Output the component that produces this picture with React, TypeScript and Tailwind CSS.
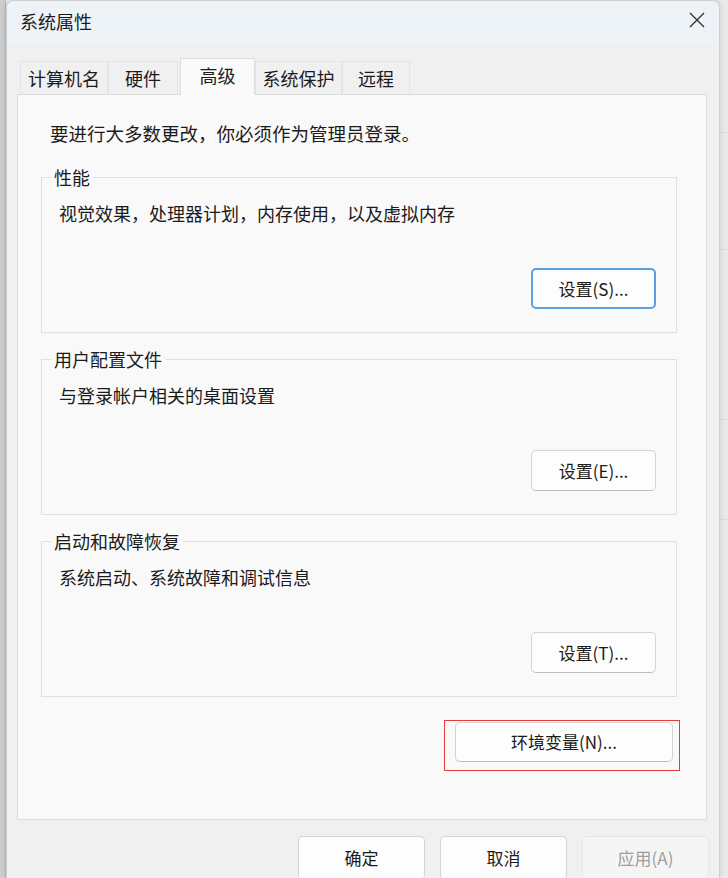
import React from "react"

const font = { fontFamily: '"Noto Sans CJK SC", "Noto Sans", sans-serif' }

const tabs = [
  { label: "计算机名", w: "w-[88px]" },
  { label: "硬件", w: "w-[70px]" },
  { label: "高级", w: "w-[75px]", active: true },
  { label: "系统保护", w: "w-[87px]" },
  { label: "远程", w: "w-[68px]" },
]

function Button({
  children,
  className = "",
  focused = false,
  disabled = false,
}: {
  children: React.ReactNode
  className?: string
  focused?: boolean
  disabled?: boolean
}) {
  const tone = disabled
    ? "bg-[#f5f5f5] border border-[#e6e6e6] text-[#9d9d9d]"
    : focused
      ? "bg-[#fdfdfd] border-2 border-[#5b9fe3] text-[#1b1b1b]"
      : "bg-[#fdfdfd] border border-[#d3d3d3] border-b-[#bdbdbd] text-[#1b1b1b]"
  return (
    <button
      className={`flex items-center justify-center rounded-[5px] text-[17px] ${tone} ${className}`}
    >
      {children}
    </button>
  )
}

function Group({
  title,
  text,
  action,
  focused,
  className = "",
}: {
  title: string
  text: string
  action: string
  focused?: boolean
  className?: string
}) {
  return (
    <div className={`relative mx-[23px] mr-[29px] h-[156px] border border-[#e0e0e0] flex flex-col ${className}`}>
      <span className="absolute -top-[13px] left-[9px] px-[3px] bg-[#f9f9f9] text-[18px] leading-[24px] text-[#1b1b1b]">
        {title}
      </span>
      <p className="pl-[17px] pt-[23px] text-[18px] leading-[24px] text-[#1b1b1b]">{text}</p>
      <Button focused={focused} className="self-end mr-[20px] mt-[43px] w-[125px] h-[41px]">
        {action}
      </Button>
    </div>
  )
}

export default function App() {
  return (
    <div className="w-[728px] h-[878px] overflow-hidden flex bg-[#e9e9e9]" style={font}>
      {/* backdrop strip on the left */}
      <div className="w-[6px] h-full bg-[#cdcdcd] border-r border-[#b9b9b9]" />

      <div className="w-[714px] h-full flex flex-col rounded-t-[8px] border-x border-t border-[#cfcfcf] bg-[#f0f0f0] overflow-hidden shadow-[0_0_6px_rgba(0,0,0,0.12)]">
        {/* title bar */}
        <div className="h-[42px] shrink-0 flex items-center justify-between bg-[#eef3f8] pl-[13px] pr-[14px]">
          <span className="text-[18px] text-[#1b1b1b] -mt-[2px]">系统属性</span>
          <svg width="16" height="16" viewBox="0 0 16 16" className="-mt-[4px]">
            <path d="M1 1L15 15M15 1L1 15" stroke="#333" strokeWidth="1.4" fill="none" />
          </svg>
        </div>

        <div className="flex flex-col pl-[10px] pr-[12px] pt-[15px]">
          {/* tab strip */}
          <div className="relative z-10 flex items-end pl-[3px]">
            {tabs.map((t) =>
              t.active ? (
                <div
                  key={t.label}
                  className={`${t.w} ml-[2px] h-[37px] -mb-px flex justify-center pt-[4px] bg-[#f9f9f9] border border-b-0 border-[#dedede] text-[18px] leading-[24px] text-[#1b1b1b]`}
                >
                  {t.label}
                </div>
              ) : (
                <div
                  key={t.label}
                  className={`${t.w} h-[33px] flex items-center justify-center bg-[#f0f0f0] border border-b-0 border-[#e4e4e4] text-[18px] text-[#1b1b1b]`}
                >
                  {t.label}
                </div>
              ),
            )}
          </div>

          {/* tab page */}
          <div className="h-[726px] border border-[#dcdcdc] bg-[#f9f9f9] pt-[26px]">
            <p className="pl-[32px] text-[18.5px] leading-[24px] text-[#1b1b1b]">
              要进行大多数更改，你必须作为管理员登录。
            </p>
            <Group
              className="mt-[32px]"
              title="性能"
              text="视觉效果，处理器计划，内存使用，以及虚拟内存"
              action="设置(S)..."
              focused
            />
            <Group className="mt-[26px]" title="用户配置文件" text="与登录帐户相关的桌面设置" action="设置(E)..." />
            <Group className="mt-[26px]" title="启动和故障恢复" text="系统启动、系统故障和调试信息" action="设置(T)..." />

            <div className="flex justify-end mr-[26px] mt-[23px]">
              <div className="w-[236px] h-[51px] border-[1.5px] border-[#e53b3b] pl-[10px] pr-[6px] pt-[1px]">
                <Button className="w-full h-[40px]">环境变量(N)...</Button>
              </div>
            </div>
          </div>
        </div>

        {/* dialog buttons */}
        <div className="flex justify-end gap-[15px] pr-[10px] pt-[16px]">
          <Button className="w-[127px] h-[44px]">确定</Button>
          <Button className="w-[127px] h-[44px]">取消</Button>
          <Button disabled className="w-[127px] h-[44px]">
            应用(A)
          </Button>
        </div>
      </div>

      {/* backdrop strip on the right */}
      <div className="flex-1 h-full flex flex-col">
        <div className="h-[133px] border-b border-[#d6d6d6]" />
        <div className="h-[117px] border-b border-[#d6d6d6]" />
        <div className="h-[170px] border-b border-[#d6d6d6]" />
        <div className="h-[100px] border-b border-[#d6d6d6]" />
      </div>
    </div>
  )
}
